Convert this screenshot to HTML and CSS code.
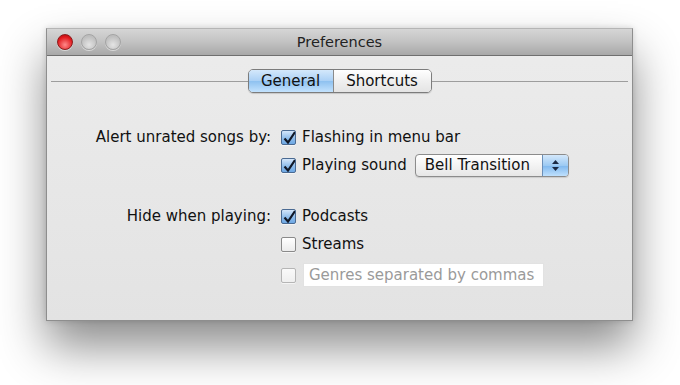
FILE: index.html
```html
<!DOCTYPE html>
<html lang="en">
<head>
    <meta charset="UTF-8">
    <title>Preferences</title>
    <link rel="stylesheet" href="styles.css">
</head>
<body>
    <div class="window">
        <div class="titlebar">
            <div class="lights">
                <span class="light close"></span>
                <span class="light"></span>
                <span class="light"></span>
            </div>
            <div class="title">Preferences</div>
        </div>
        <div class="content">
            <div class="tabs">
                <span class="tab-line"></span>
                <div class="segmented">
                    <span class="seg active">General</span>
                    <span class="seg">Shortcuts</span>
                </div>
                <span class="tab-line"></span>
            </div>

            <div class="form">
                <div class="row">
                    <div class="label">Alert unrated songs by:</div>
                    <label class="check"><span class="box checked"></span>Flashing in menu bar</label>
                </div>
                <div class="row">
                    <div class="label"></div>
                    <label class="check"><span class="box checked"></span>Playing sound</label>
                    <div class="popup">
                        <span class="popup-text">Bell Transition</span>
                        <span class="popup-arrows">
                            <svg width="9" height="13" viewBox="0 0 9 13"><path d="M4.5 1 L8 5 L1 5 Z M4.5 12 L8 8 L1 8 Z" fill="#1b2a44"/></svg>
                        </span>
                    </div>
                </div>
                <div class="row group">
                    <div class="label">Hide when playing:</div>
                    <label class="check"><span class="box checked"></span>Podcasts</label>
                </div>
                <div class="row">
                    <div class="label"></div>
                    <label class="check"><span class="box"></span>Streams</label>
                </div>
                <div class="row last">
                    <div class="label"></div>
                    <label class="check"><span class="box dim"></span></label>
                    <div class="field">Genres separated by commas</div>
                </div>
            </div>
        </div>
    </div>
</body>
</html>
```

FILE: styles.css
```css
* {
    margin: 0;
    padding: 0;
    box-sizing: border-box;
}
body {
    font-family: "DejaVu Sans", "Liberation Sans", sans-serif;
    font-size: 15px;
    background-color: #ffffff;
    width: 680px;
    height: 385px;
    overflow: hidden;
}
.window {
    width: 587px;
    height: 293px;
    margin: 28px 0 0 46px;
    background: linear-gradient(#ececec, #e3e3e3);
    border: 1px solid #8e8e8e;
    border-top-color: #b5b5b5;
    box-shadow: 0 26px 44px rgba(0, 0, 0, 0.45), 0 0 6px rgba(0, 0, 0, 0.15);
}
.titlebar {
    height: 27px;
    background: linear-gradient(#d6d6d6, #c2c2c2 50%, #a8a8a8);
    border-bottom: 1px solid #6f6f6f;
    display: flex;
    align-items: center;
    position: relative;
}
.lights {
    display: flex;
    gap: 8px;
    padding-left: 10px;
}
.light {
    width: 16px;
    height: 16px;
    border-radius: 50%;
    background: radial-gradient(circle at 50% 70%, #e4e4e4, #bebebe 70%);
    border: 1px solid #a4a4a4;
    box-shadow: 0 1px 0 rgba(255, 255, 255, 0.5);
}
.light.close {
    background: radial-gradient(circle at 50% 70%, #ff8a8a, #e0171b 65%, #a00a0e);
    border-color: #8c1c1c;
}
.title {
    position: absolute;
    left: 0;
    right: 0;
    text-align: center;
    font-size: 14.5px;
    color: #222;
    pointer-events: none;
}
.content {
    padding: 13px 4px 0;
}
.tabs {
    display: flex;
    align-items: center;
}
.tab-line {
    flex: 1;
    height: 1px;
    background-color: #9d9d9d;
}
.segmented {
    display: flex;
    height: 24px;
    border: 1px solid #7c7c7c;
    border-radius: 5px;
    overflow: hidden;
    box-shadow: 0 1px 1px rgba(0, 0, 0, 0.15);
}
.seg {
    display: flex;
    align-items: center;
    justify-content: center;
    height: 100%;
    background: linear-gradient(#ffffff, #f0f0f0 50%, #e4e4e4);
    color: #111;
}
.seg:first-child {
    width: 85px;
    border-right: 1px solid #8a8a8a;
}
.seg:last-child {
    width: 97px;
}
.seg.active {
    background: linear-gradient(#d4e8fb, #aad0f5 50%, #8ec1f0 51%, #c3e2fd);
}
.form {
    margin-top: 30px;
}
.row {
    display: flex;
    align-items: center;
    height: 28px;
}
.row.group {
    margin-top: 23px;
}
.row.last {
    margin-top: 3px;
}
.label {
    width: 230px;
    text-align: right;
    padding-right: 10px;
    color: #111;
}
.check {
    display: flex;
    align-items: center;
    gap: 6px;
    color: #111;
}
.box {
    width: 15px;
    height: 15px;
    border: 1px solid #8a8a8a;
    border-radius: 2px;
    background: linear-gradient(#ffffff, #ececec);
    box-shadow: 0 1px 0 rgba(255, 255, 255, 0.6);
}
.box.checked {
    border-color: #4a6a92;
    background-image: url("data:image/svg+xml,%3Csvg xmlns='http://www.w3.org/2000/svg' width='15' height='15'%3E%3Cpath d='M2.5 7.5 L6 11.5 L13 1' fill='none' stroke='%23111827' stroke-width='2.2'/%3E%3C/svg%3E"), linear-gradient(#d4e6fa, #8fbdeb 55%, #6ea8e4);
}
.box.dim {
    border-color: #b5b5b5;
    background: linear-gradient(#fafafa, #efefef);
}
.popup {
    display: flex;
    margin-left: 8px;
    width: 154px;
    height: 23px;
    border: 1px solid #8c8c8c;
    border-radius: 4px;
    overflow: hidden;
    background: linear-gradient(#ffffff, #f3f3f3 50%, #e6e6e6);
    box-shadow: 0 1px 1px rgba(0, 0, 0, 0.12);
}
.popup-text {
    flex: 1;
    display: flex;
    align-items: center;
    padding-left: 9px;
    color: #111;
}
.popup-arrows {
    width: 26px;
    display: flex;
    align-items: center;
    justify-content: center;
    background: linear-gradient(#d4e8fb, #9ccaf3 50%, #7fb8ee 51%, #bfe0fd);
    border-left: 1px solid #6b8fb8;
}
.field {
    margin-left: 7px;
    width: 241px;
    height: 24px;
    background-color: #ffffff;
    border: 1px solid #e2e2e2;
    color: #9a9a9a;
    display: flex;
    align-items: center;
    padding-left: 5px;
}
```
